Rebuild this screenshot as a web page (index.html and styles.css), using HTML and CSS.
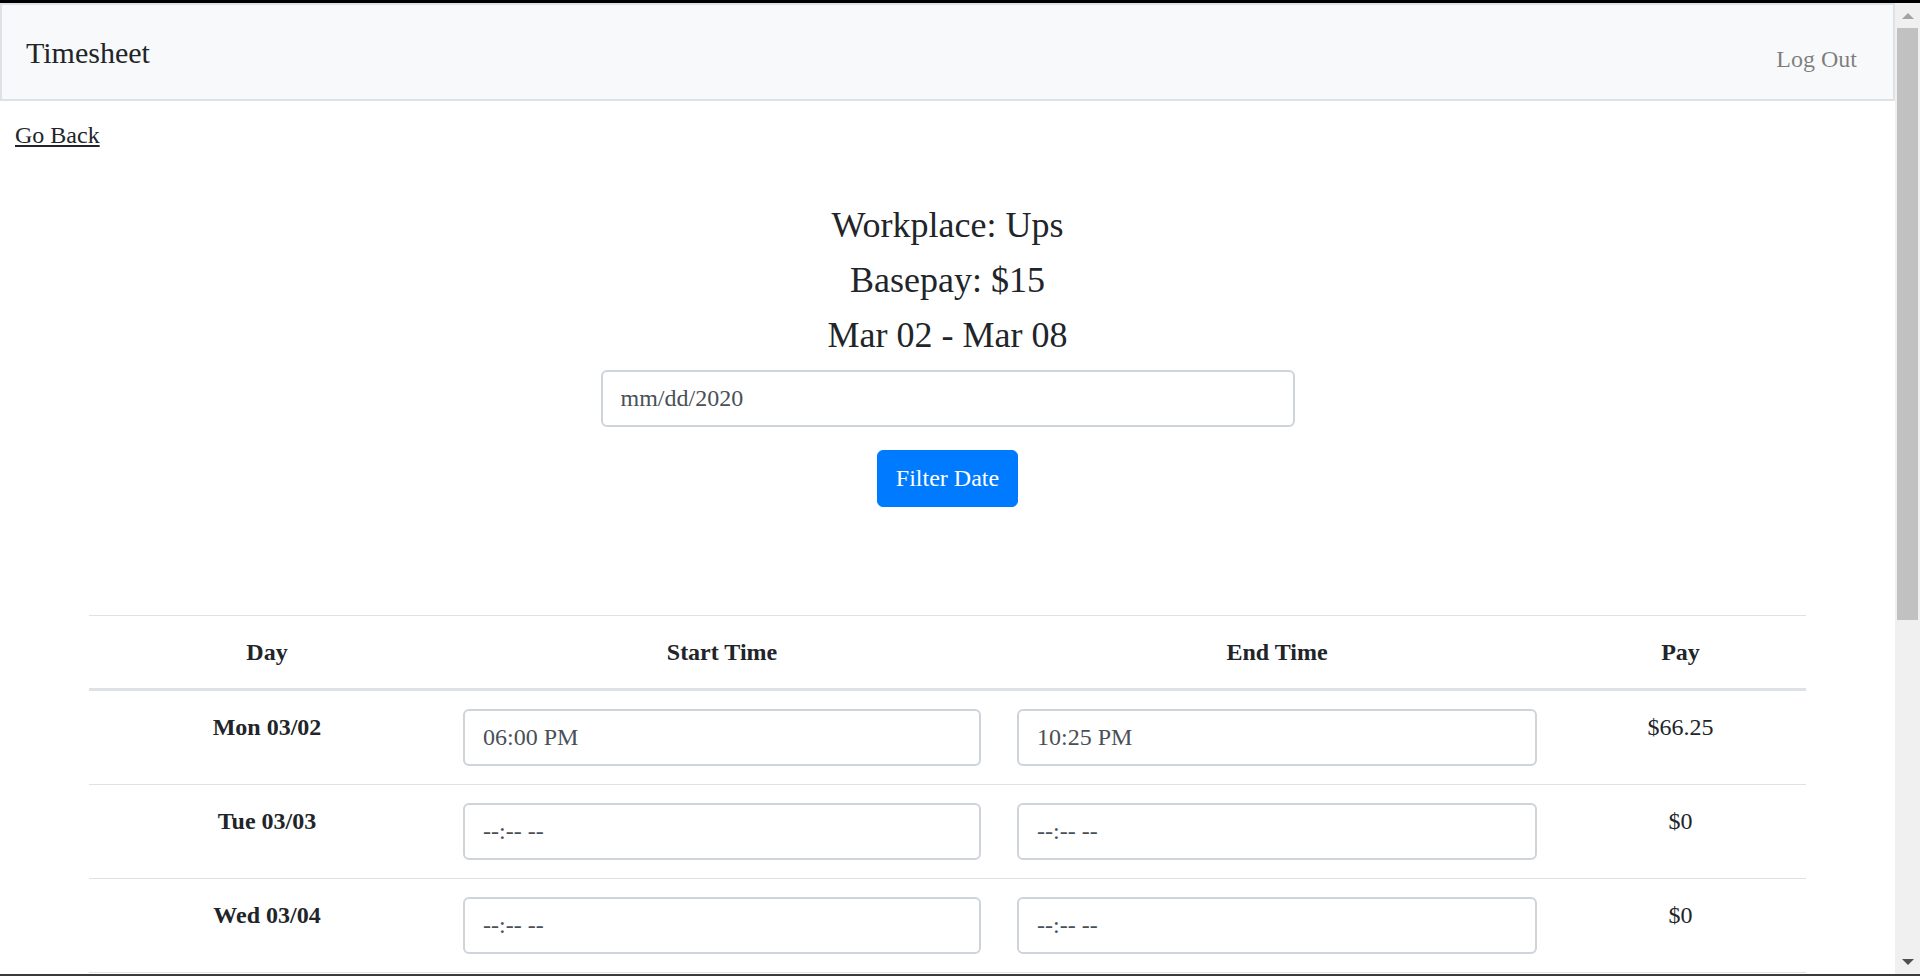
FILE: index.html
```html
<!DOCTYPE html>
<html lang="en">
<head>
<meta charset="utf-8">
<title>Timesheet</title>
<link rel="stylesheet" href="styles.css">
</head>
<body>
<div class="window">
  <div class="page">
    <nav class="navbar">
      <span class="brand">Timesheet</span>
      <a class="nav-link" href="#">Log Out</a>
    </nav>
    <div class="back-row"><a class="back" href="#">Go Back</a></div>
    <section class="summary">
      <h4 class="title">Workplace: Ups</h4>
      <h4 class="title">Basepay: $15</h4>
      <h4 class="title">Mar 02 - Mar 08</h4>
      <input class="form-control date-input" type="text" value="mm/dd/2020">
      <button class="btn-primary" type="button">Filter Date</button>
    </section>
    <table class="sheet">
      <colgroup>
        <col class="c-day"><col class="c-start"><col class="c-end"><col class="c-pay">
      </colgroup>
      <thead>
        <tr><th>Day</th><th>Start Time</th><th>End Time</th><th>Pay</th></tr>
      </thead>
      <tbody>
        <tr>
          <th>Mon 03/02</th>
          <td><input class="form-control" type="text" value="06:00 PM"></td>
          <td><input class="form-control" type="text" value="10:25 PM"></td>
          <td>$66.25</td>
        </tr>
        <tr>
          <th>Tue 03/03</th>
          <td><input class="form-control" type="text" value="--:-- --"></td>
          <td><input class="form-control" type="text" value="--:-- --"></td>
          <td>$0</td>
        </tr>
        <tr class="last">
          <th>Wed 03/04</th>
          <td><input class="form-control" type="text" value="--:-- --"></td>
          <td><input class="form-control" type="text" value="--:-- --"></td>
          <td>$0</td>
        </tr>
      </tbody>
    </table>
  </div>
  <div class="scrollbar">
    <div class="arrow arrow-up"></div>
    <div class="track"><div class="thumb"></div></div>
    <div class="arrow arrow-down"></div>
  </div>
</div>
</body>
</html>
```
FILE: styles.css
```css
* { box-sizing: border-box; }
html, body { margin: 0; padding: 0; height: 100%; overflow: hidden; }
body {
  font-family: "Liberation Serif", "Times New Roman", serif;
  font-size: 24px;
  line-height: 36px;
  color: #212529;
  background: #fff;
}
.window {
  height: 976px;
  display: flex;
  border-top: 3px solid #000;
  border-bottom: 2px solid #3a3a3a;
  overflow: hidden;
}
.page {
  flex: 1;
  min-width: 0;
  overflow: hidden;
}
.navbar {
  height: 98px;
  background: #f8f9fa;
  border: 2px solid #dee2e6;
  padding: 0 24px;
  display: flex;
  align-items: center;
  justify-content: space-between;
}
.brand {
  font-size: 30px;
  line-height: 45px;
}
.nav-link {
  color: rgba(0,0,0,.5);
  text-decoration: none;
  padding: 14px 12px 0 12px;
  line-height: 36px;
}
.back-row {
  padding: 16px 0 0 15px;
}
.back {
  color: #212529;
  text-decoration: underline;
}
.summary {
  display: flex;
  flex-direction: column;
  align-items: center;
  padding-top: 51px;
}
.title {
  margin: 0 0 12px 0;
  font-size: 36px;
  line-height: 43.2px;
  font-weight: normal;
}
.form-control {
  display: block;
  height: 57px;
  padding: 9px 18px;
  font-family: inherit;
  font-size: 24px;
  line-height: 36px;
  color: #495057;
  background: #fff;
  border: 2px solid #ced4da;
  border-radius: 6px;
  width: 100%;
  margin: 0;
}
.date-input {
  width: 694px;
}
.btn-primary {
  margin-top: 23px;
  height: 57px;
  padding: 9px 18px;
  font-family: inherit;
  font-size: 24px;
  line-height: 36px;
  color: #fff;
  background: #007bff;
  border: 1px solid #007bff;
  border-radius: 6px;
}
.sheet {
  margin: 108px auto 0 auto;
  width: 1717px;
  table-layout: fixed;
  border-collapse: collapse;
}
.c-day { width: 356px; }
.c-start { width: 554px; }
.c-end { width: 556px; }
.c-pay { width: 251px; }
.sheet th, .sheet td {
  padding: 18px;
  text-align: center;
  vertical-align: top;
  border-top: 1px solid #dee2e6;
}
.sheet th { font-weight: bold; }
.sheet td { font-weight: normal; }
.sheet thead th {
  border-bottom: 3px solid #dee2e6;
}
.sheet tr.last th, .sheet tr.last td {
  border-bottom: 1px solid #dee2e6;
}
.scrollbar {
  width: 25px;
  flex: none;
  background: #f0f0f0;
  display: flex;
  flex-direction: column;
  align-items: center;
}
.arrow {
  height: 25px;
  width: 25px;
  flex: none;
  display: flex;
  align-items: center;
  justify-content: center;
}
.arrow-up::before {
  content: "";
  border-left: 6px solid transparent;
  border-right: 6px solid transparent;
  border-bottom: 6px solid #a3a3a3;
}
.arrow-down::before {
  content: "";
  border-left: 6px solid transparent;
  border-right: 6px solid transparent;
  border-top: 6px solid #505050;
}
.track {
  flex: 1;
  width: 100%;
  padding: 0 2px;
}
.thumb {
  height: 592px;
  background: #c1c1c1;
}
```
